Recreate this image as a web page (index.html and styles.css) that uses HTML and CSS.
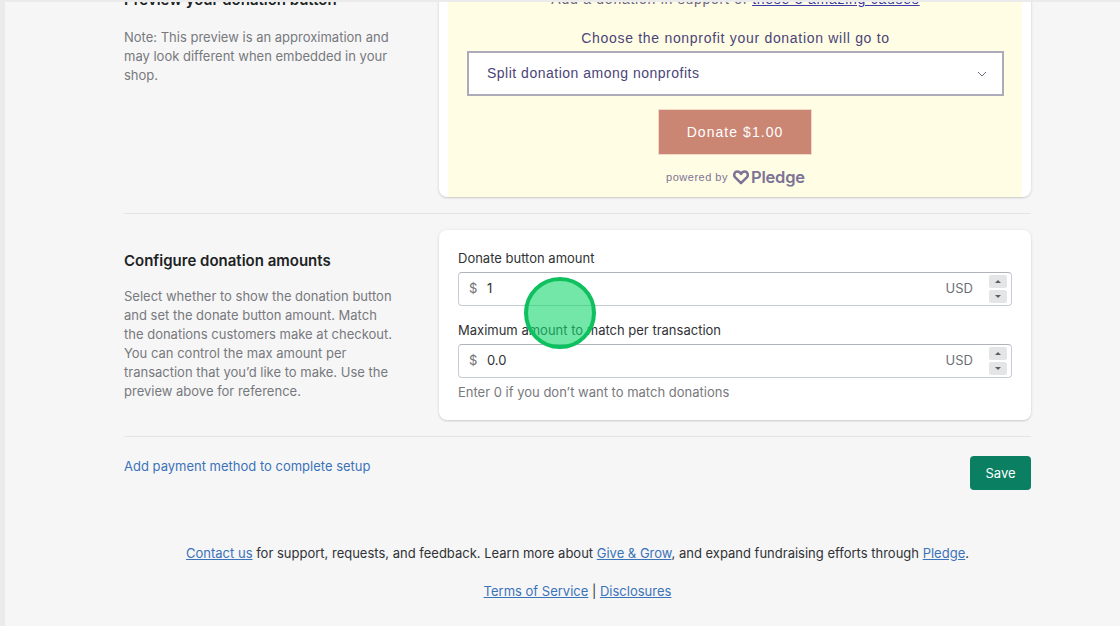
FILE: index.html
```html
<!DOCTYPE html>
<html lang="en">
<head>
    <meta charset="UTF-8">
    <meta name="viewport" content="width=device-width, initial-scale=1.0">
    <title>Donation settings</title>
    <link rel="stylesheet" href="styles.css">
</head>
<body>
    <div class="top-strip"></div>
    <div class="page">
        <div class="side-rail"></div>
        <main class="content">
            <section class="settings-row preview-row">
                <div class="row-info">
                    <h2>Preview your donation button</h2>
                    <p>Note: This preview is an approximation and may look different when embedded in your shop.</p>
                </div>
                <div class="card preview-card">
                    <div class="preview-panel">
                        <p class="support-line">Add a donation in support of <a href="#">these 3 amazing causes</a></p>
                        <label class="choose-label">Choose the nonprofit your donation will go to</label>
                        <div class="nonprofit-select">
                            <span>Split donation among nonprofits</span>
                            <svg width="10" height="6" viewBox="0 0 10 6"><path d="M1 1l4 4 4-4" fill="none" stroke="#6f6a80" stroke-width="1"/></svg>
                        </div>
                        <button class="donate-button">Donate $1.00</button>
                        <div class="powered-by">
                            <span>powered by</span>
                            <span class="pledge-logo">
                                <svg width="16" height="15" viewBox="0 0 16 15"><path d="M8 13.200L2.200 7.400C.2 5.300 1.400 1.500 4.400 1.500c1.600 0 2.800.9 3.600 2.400.8-1.500 2-2.400 3.600-2.400 3 0 4.200 3.800 2.200 5.900z" fill="none" stroke="#7c7396" stroke-width="2.500" stroke-linejoin="round"/></svg>
                                Pledge
                            </span>
                        </div>
                    </div>
                </div>
            </section>

            <section class="settings-row amounts-row">
                <div class="row-info">
                    <h2>Configure donation amounts</h2>
                    <p>Select whether to show the donation button and set the donate button amount. Match the donations customers make at checkout. You can control the max amount per transaction that you’d like to make. Use the preview above for reference.</p>
                </div>
                <div class="card amounts-card">
                    <label class="field-label">Donate button amount</label>
                    <div class="amount-input">
                        <span class="prefix">$</span>
                        <span class="value">1</span>
                        <span class="suffix">USD</span>
                        <div class="stepper">
                            <div class="step"><i class="arrow-up"></i></div>
                            <div class="step"><i class="arrow-down"></i></div>
                        </div>
                    </div>
                    <label class="field-label second">Maximum amount to match per transaction</label>
                    <div class="amount-input">
                        <span class="prefix">$</span>
                        <span class="value">0.0</span>
                        <span class="suffix">USD</span>
                        <div class="stepper">
                            <div class="step"><i class="arrow-up"></i></div>
                            <div class="step"><i class="arrow-down"></i></div>
                        </div>
                    </div>
                    <p class="help-text">Enter 0 if you don’t want to match donations</p>
                </div>
            </section>

            <div class="actions">
                <a href="#" class="setup-link">Add payment method to complete setup</a>
                <button class="save-button">Save</button>
            </div>

            <footer class="page-footer">
                <p><a href="#">Contact us</a> for support, requests, and feedback. Learn more about <a href="#">Give &amp; Grow</a>, and expand fundraising efforts through <a href="#">Pledge</a>.</p>
                <p><a href="#">Terms of Service</a> | <a href="#">Disclosures</a></p>
            </footer>
        </main>
    </div>
    <div class="click-marker"></div>
</body>
</html>
```

FILE: styles.css
```css
* {
    box-sizing: border-box;
}
html, body {
    margin: 0;
    height: 100%;
    overflow: hidden;
}
body {
    font-family: Inter, "Liberation Sans", sans-serif;
    font-size: 13px;
    line-height: 19px;
    color: #303235;
    background-color: #f6f6f7;
    position: relative;
}
.top-strip {
    height: 2px;
    background-color: #ebebeb;
}
.page {
    display: flex;
    height: 624px;
    overflow: hidden;
}
.side-rail {
    width: 5px;
    flex-shrink: 0;
    background-color: #ebebeb;
}
.content {
    flex: 1;
    padding: 0 89px 0 119px;
}
.settings-row {
    display: grid;
    grid-template-columns: 315px 592px;
}
.preview-row {
    height: 224px;
    margin-top: -12px;
    border-bottom: 1px solid #e3e4e5;
}
.amounts-row {
    height: 223px;
    padding-top: 16px;
    border-bottom: 1px solid #e3e4e5;
}
.row-info h2 {
    margin: 0;
    font-size: 15px;
    line-height: 20px;
    font-weight: 600;
    color: #202223;
}
.row-info p {
    margin: 16px 0 0;
    width: 272px;
    color: #77797d;
}
.preview-row .row-info p {
    margin-top: 18px;
}
.amounts-row .row-info {
    padding-top: 21px;
}
.card {
    background-color: #fff;
    border-radius: 8px;
    box-shadow: 0 0 4px rgba(23, 24, 24, 0.06), 0 1px 2px rgba(0, 0, 0, 0.15);
}
.preview-card {
    height: 207px;
    padding: 0 9px;
    border-radius: 0 0 8px 8px;
}
.preview-panel {
    height: 100%;
    background-color: #fffde4;
    padding: 0 18px 0 19px;
    text-align: center;
    font-family: "Liberation Sans", Arial, sans-serif;
    letter-spacing: 0.7px;
    color: #4b4478;
}
.support-line {
    margin: 0;
    height: 30px;
    font-size: 14px;
    letter-spacing: 0.75px;
    color: #6b6480;
}
.support-line a {
    color: #3a3aa8;
}
.choose-label {
    display: block;
    margin-top: 9px;
    font-size: 14px;
    line-height: 19px;
}
.nonprofit-select {
    display: flex;
    justify-content: space-between;
    align-items: center;
    height: 45px;
    margin-top: 3px;
    padding: 0 15px 0 18px;
    background-color: #fff;
    border: 2px solid #aeaaba;
    font-size: 14px;
    letter-spacing: 0.5px;
}
.donate-button {
    display: block;
    width: 154px;
    height: 46px;
    margin: 13px 0 0 191px;
    border: 1px solid #f0d9c8;
    background-color: #cb8573;
    color: #fff;
    font-family: inherit;
    font-size: 14px;
    letter-spacing: 1.05px;
}
.powered-by {
    display: flex;
    justify-content: center;
    align-items: center;
    gap: 5px;
    margin-top: 13px;
    font-size: 11px;
    letter-spacing: 0.5px;
    color: #7c7396;
}
.pledge-logo {
    display: flex;
    align-items: center;
    gap: 2px;
    font-family: Inter, sans-serif;
    font-size: 16.500px;
    font-weight: 600;
    letter-spacing: -0.2px;
}
.amounts-card {
    height: 190px;
    padding: 19px 19px 0;
}
.field-label {
    display: block;
    height: 23px;
}
.field-label.second {
    margin-top: 15px;
}
.amount-input {
    display: flex;
    align-items: center;
    height: 34px;
    padding: 0 4px 1px 10px;
    border: 1px solid #c4cdd5;
    border-top-color: #aeb4b9;
    border-radius: 4px;
    background-color: #fff;
}
.prefix {
    width: 18px;
    color: #6d7175;
}
.value {
    flex: 1;
}
.suffix {
    margin-right: 16px;
    color: #6d7175;
}
.stepper {
    display: flex;
    flex-direction: column;
    gap: 2px;
}
.step {
    display: flex;
    align-items: center;
    justify-content: center;
    width: 18px;
    height: 13px;
    border-radius: 2px;
    background-color: #e4e5e7;
}
.arrow-up, .arrow-down {
    width: 0;
    height: 0;
    border-left: 3px solid transparent;
    border-right: 3px solid transparent;
}
.arrow-up {
    border-bottom: 3px solid #5c5f62;
}
.arrow-down {
    border-top: 3px solid #5c5f62;
}
.help-text {
    margin: 5px 0 0;
    color: #77797d;
}
.actions {
    display: flex;
    justify-content: space-between;
    align-items: flex-start;
    padding-top: 19px;
}
.setup-link {
    margin-top: 1px;
    color: #3b73b9;
    text-decoration: none;
}
.save-button {
    width: 61px;
    height: 34px;
    border: none;
    border-radius: 4px;
    background-color: #0a7f61;
    color: #fff;
    font-family: inherit;
    font-size: 13px;
}
.page-footer {
    margin-top: 54px;
    text-align: center;
}
.page-footer p {
    margin: 0 0 19px;
}
.page-footer a {
    color: #3b73b9;
}
.click-marker {
    position: absolute;
    left: 524px;
    top: 277px;
    width: 72px;
    height: 72px;
    border: 4px solid #0fc05f;
    border-radius: 50%;
    background-color: rgba(20, 215, 110, 0.6);
}
```
